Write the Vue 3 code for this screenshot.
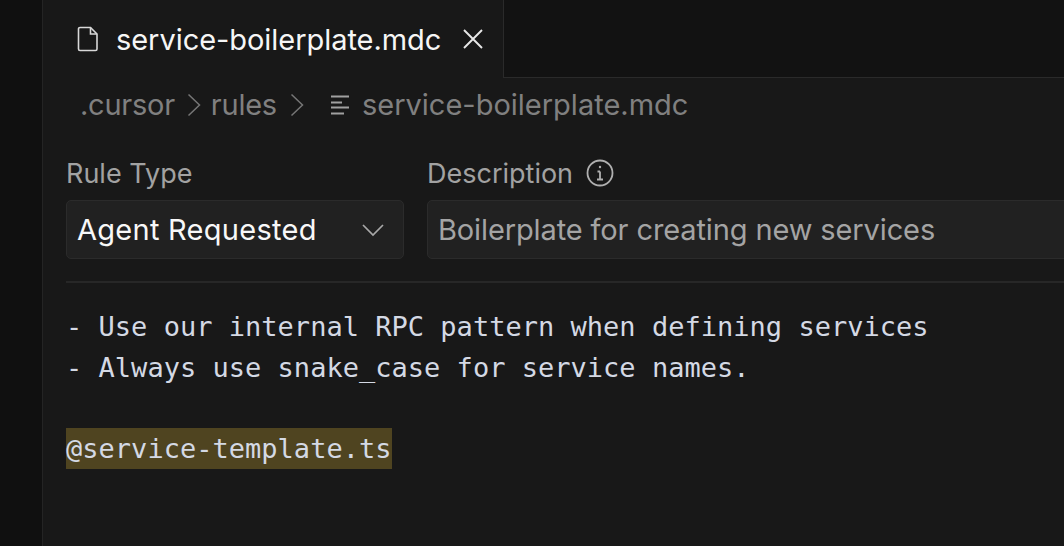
<script setup>
const lines = [
  '- Use our internal RPC pattern when defining services',
  '- Always use snake_case for service names.',
]
</script>

<template>
  <div class="app">
    <aside class="rail"></aside>
    <main class="main">
      <div class="tabbar">
        <div class="tab">
          <svg class="file" width="22" height="26" viewBox="0 0 22 26" fill="none" stroke="#d8d8d8" stroke-width="1.6">
            <path d="M3 1.5h10.5l6.5 6.5v15a1.5 1.5 0 0 1-1.5 1.5h-15.500a1.500 1.500 0 0 1-1.500-1.500v-20a1.500 1.500 0 0 1 1.500-1.500z" />
            <path d="M13.500 1.500v6.500h6.500" />
          </svg>
          <span class="tabname">service-boilerplate.mdc</span>
          <svg class="close" width="22" height="22" viewBox="0 0 22 22" fill="none" stroke="#e8e8e8" stroke-width="1.900">
            <path d="M2 2l18 18M20 2L2 20" />
          </svg>
        </div>
        <div class="tabrest"></div>
      </div>
      <div class="crumbs">
        <span class="short">.cursor</span>
        <svg class="chev first" width="14" height="24" viewBox="0 0 14 24" fill="none" stroke="#767676" stroke-width="1.500"><path d="M1.500 1.500l11 10.500-11 10.500" /></svg>
        <span class="short">rules</span>
        <svg class="chev second" width="14" height="24" viewBox="0 0 14 24" fill="none" stroke="#767676" stroke-width="1.500"><path d="M1.500 1.500l11 10.500-11 10.500" /></svg>
        <svg class="lines" width="20" height="20" viewBox="0 0 20 20" fill="none" stroke="#a0a0a0" stroke-width="2"><path d="M1 1.500h18M1 7.500h11M1 12.500h18M1 18.500h13" /></svg>
        <span>service-boilerplate.mdc</span>
      </div>
      <div class="form">
        <div class="field type">
          <label>Rule Type</label>
          <div class="box">
            <span class="value">Agent Requested</span>
            <svg width="24" height="14" viewBox="0 0 24 14" fill="none" stroke="#a8a8a8" stroke-width="1.700"><path d="M2 2l10 10L22 2" /></svg>
          </div>
        </div>
        <div class="field desc">
          <label>Description
            <svg class="info" width="28" height="28" viewBox="0 0 28 28" fill="none" stroke="#b0b0b0" stroke-width="1.800">
              <circle cx="14" cy="14" r="12.500" />
              <path d="M14 12.500v8M11.500 12.500H14M11 20.500h6" />
              <circle cx="14" cy="8" r="1.200" fill="#b0b0b0" stroke="none" />
            </svg>
          </label>
          <div class="box descbox">Boilerplate for creating new services</div>
        </div>
      </div>
      <div class="rule"></div>
      <div class="code">
        <div v-for="l in lines" :key="l" class="line">{{ l }}</div>
        <div class="line">&nbsp;</div>
        <div class="line last"><span class="mention">@service-template.ts</span></div>
      </div>
    </main>
  </div>
</template>

<style>
html, body { margin: 0; background: #181818; overflow: hidden; }
</style>

<style scoped>
.app { display: flex; width: 1064px; height: 546px; background: #181818; font-family: Inter, "Liberation Sans", sans-serif; overflow: hidden; }
.rail { width: 42px; flex: none; background: #101010; border-right: 1px solid #242424; }
.main { flex: 1; min-width: 0; display: flex; flex-direction: column; }
.tabbar { display: flex; height: 78px; flex: none; }
.tab { width: 461px; flex: none; display: flex; align-items: center; box-sizing: border-box; padding: 0 0 0 34px; border-right: 1px solid #2a2a2a; color: #f6f6f6; font-size: 29px; }
.file { flex: none; }
.tabname { margin-left: 17px; white-space: nowrap; letter-spacing: -0.05px; }
.close { flex: none; margin-left: 21px; }
.tabrest { flex: 1; background: #121212; border-bottom: 1px solid #2a2a2a; }
.crumbs { display: flex; align-items: center; height: 54px; padding-left: 37px; color: #808080; font-size: 29px; white-space: nowrap; line-height: 1.200; }
.short { letter-spacing: -0.25px; }
.chev { flex: none; }
.chev.first { margin: 0 10px 0 12px; }
.chev.second { margin: 0 10px 0 13px; }
.lines { margin: 0 12px 0 16px; flex: none; }
.form { display: flex; gap: 23px; padding: 14px 0 0 23px; }
.field { flex: none; display: flex; flex-direction: column; }
label { display: flex; align-items: center; gap: 13px; height: 54px; color: #a2a2a2; font-size: 27px; white-space: nowrap; }
.info { flex: none; }
.box { height: 59px; box-sizing: border-box; background: #212121; border: 1px solid #2b2b2b; border-radius: 5px; display: flex; align-items: center; padding: 0 10px; font-size: 29px; white-space: nowrap; }
.type .box { width: 338px; justify-content: space-between; padding-right: 18px; }
.value { color: #f8f8f8; letter-spacing: 0.27px; }
.descbox { width: 700px; color: #a4a4a4; letter-spacing: -0.12px; }
.rule { height: 2px; background: #272727; margin: 22px 0 0 23px; }
.code { padding: 24px 0 0 23px; font-family: "DejaVu Sans Mono", "Liberation Mono", monospace; font-size: 27px; letter-spacing: 0.02px; line-height: 40.500px; color: #d4d9e4; white-space: pre; }
.line { height: 40.500px; }
.line.last { margin-top: -1px; }
.mention { background: #4f4420; display: inline-block; height: 40px; padding-top: 1px; }
</style>
